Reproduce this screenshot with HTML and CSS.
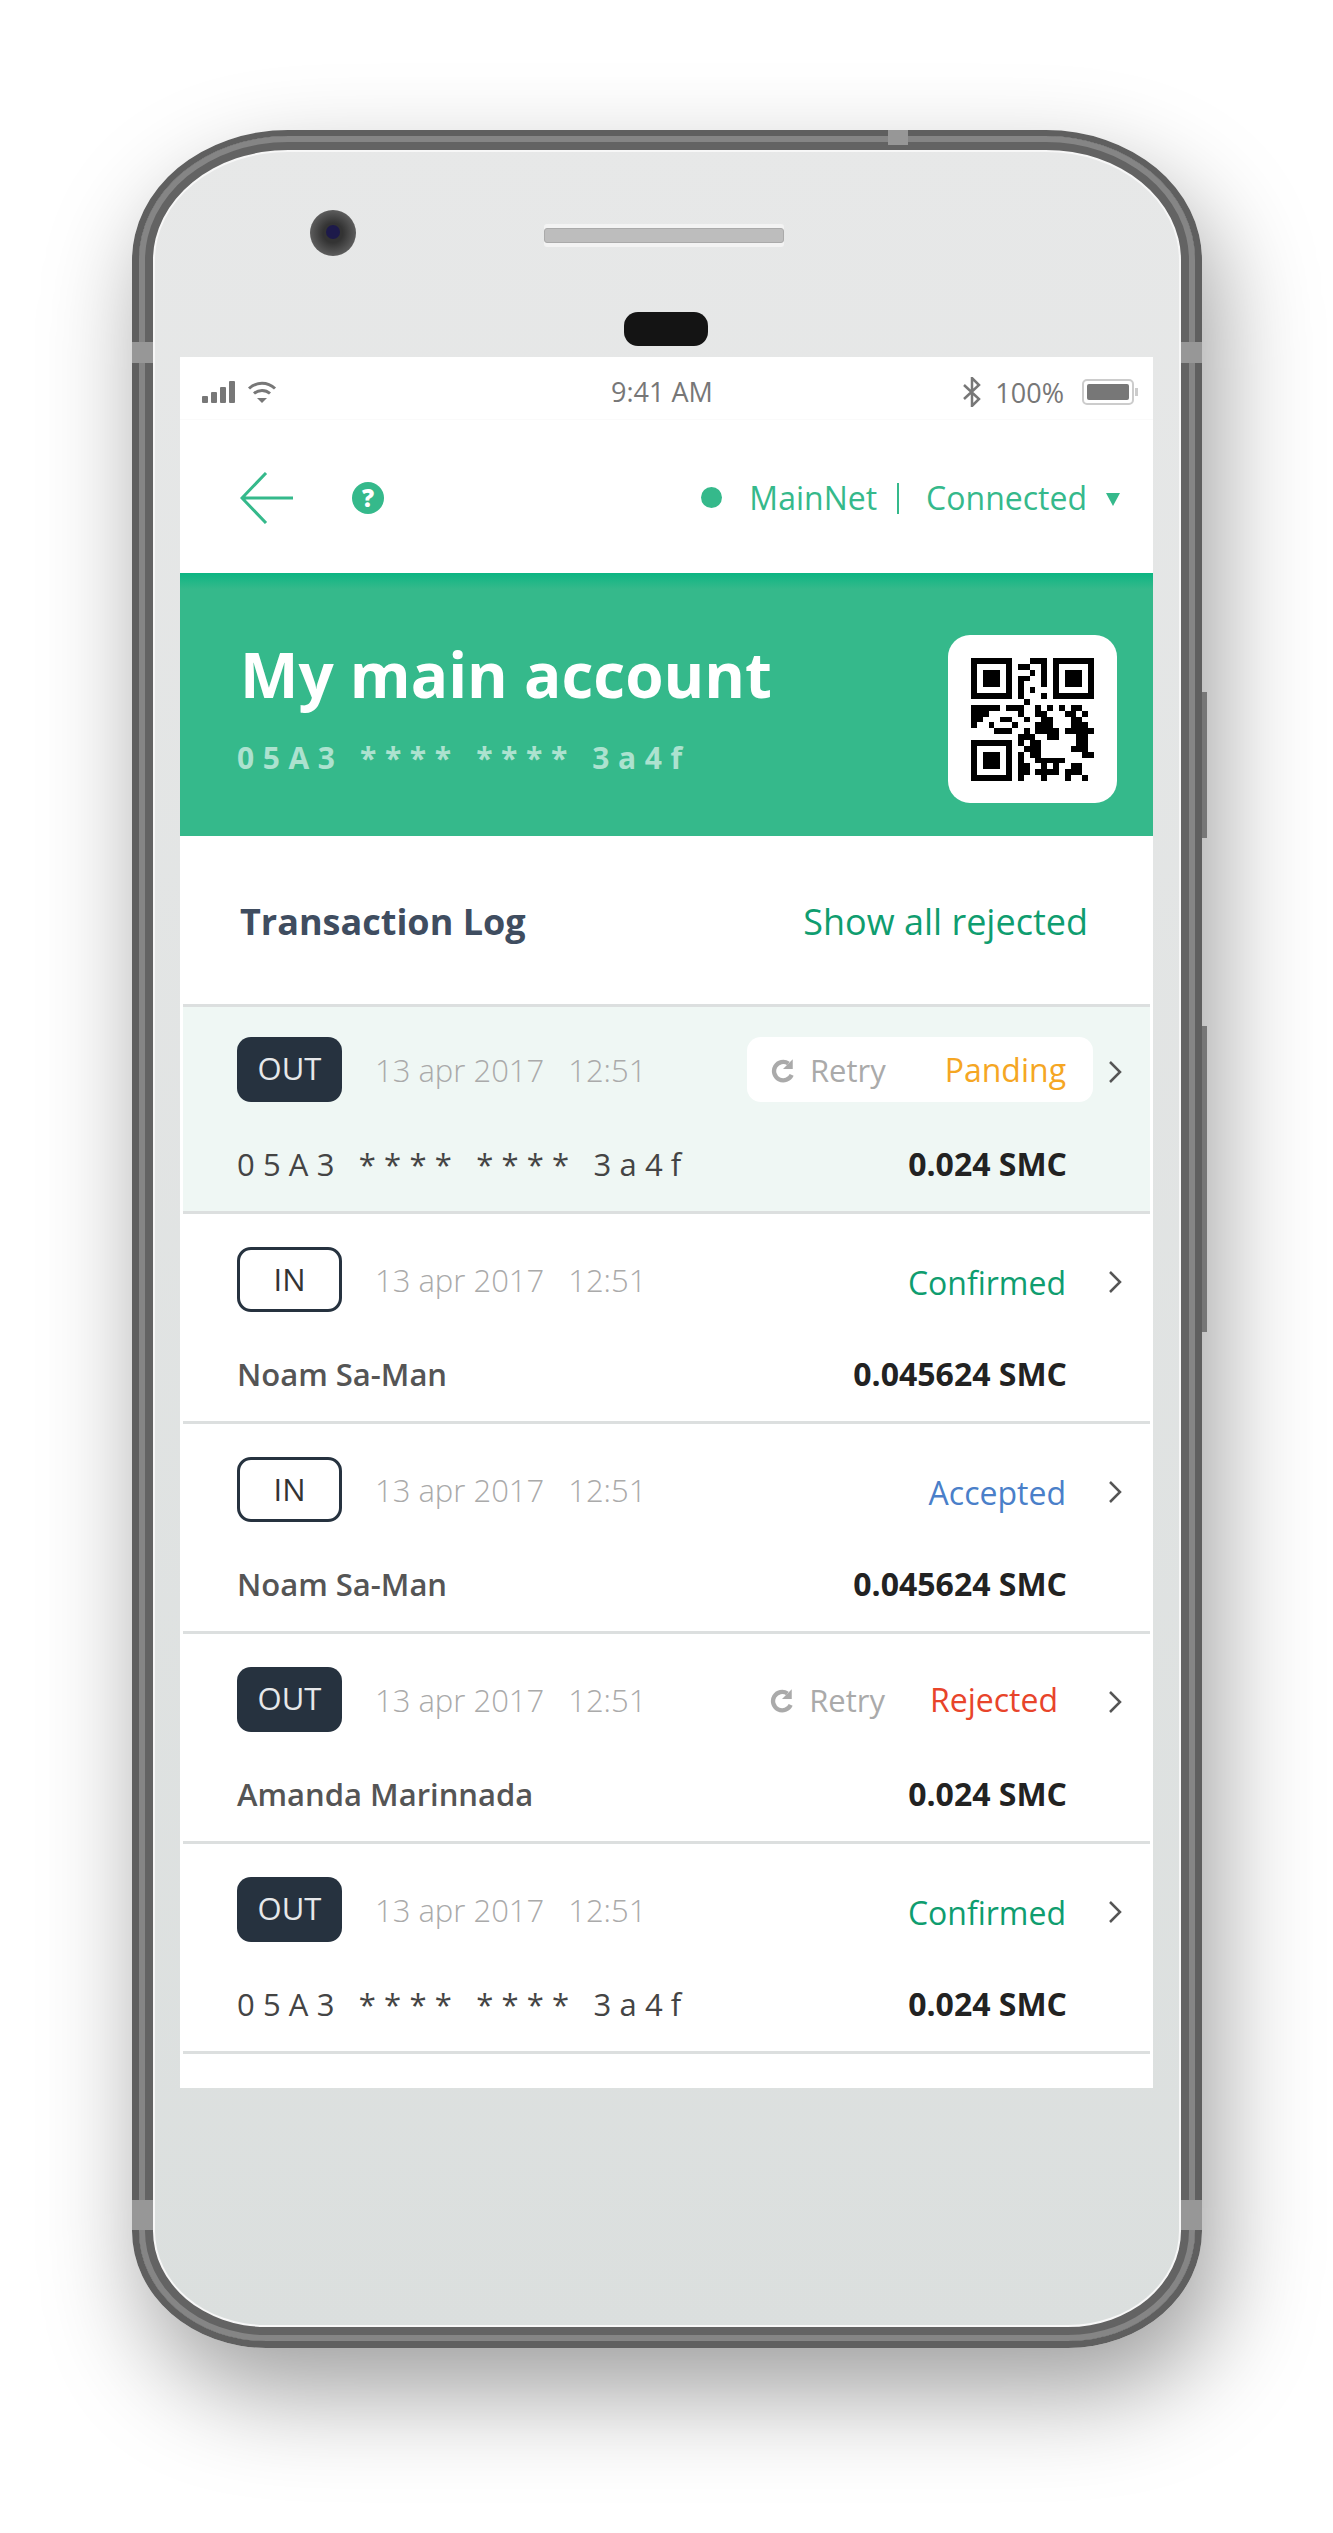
FILE: index.html
```html
<!doctype html>
<html lang="en">
  <head>
    <meta charset="UTF-8">
    <title>Transaction Log</title>
    <link rel="stylesheet" href="styles.css">
  </head>
  <body>
    <div class="phone">
      <span class="notch notch-top"></span>
      <span class="notch notch-left"></span>
      <span class="notch notch-right"></span>
      <span class="notch notch-left-low"></span>
      <span class="notch notch-right-low"></span>
      <span class="side-key key-upper"></span>
      <span class="side-key key-lower"></span>

      <div class="bezel-top">
        <div class="camera"><span></span></div>
        <div class="speaker"></div>
        <div class="sensor"></div>
      </div>

      <main class="screen">
        <div class="status-bar">
          <div class="status-left">
            <svg width="34" height="22" viewBox="0 0 34 22" fill="#777">
              <rect x="0" y="15" width="6" height="7" rx="1"/>
              <rect x="9" y="11" width="6" height="11" rx="1"/>
              <rect x="18" y="6" width="6" height="16" rx="1"/>
              <rect x="27" y="0" width="6" height="22" rx="1"/>
            </svg>
            <svg width="30" height="22" viewBox="0 0 30 22" fill="none" stroke="#777" stroke-width="3">
              <path d="M2 7.5C9.5 .5 20.5 .5 28 7.5"/>
              <path d="M7 12.5C11.500 8.500 18.500 8.500 23 12.500"/>
              <path d="M10 17h10l-5 5z" fill="#777" stroke="none"/>
            </svg>
          </div>
          <div class="status-time">9:41 AM</div>
          <div class="status-right">
            <svg width="20" height="30" viewBox="0 0 20 30" fill="none" stroke="#777" stroke-width="2.500">
              <path d="M2 8l15 14-7 7V1l7 7L2 22"/>
            </svg>
            <span>100%</span>
            <div class="battery"><span></span></div>
          </div>
        </div>

        <nav class="top-nav">
          <svg class="back" width="54" height="52" viewBox="0 0 54 52" fill="none" stroke="#35b98b" stroke-width="3">
            <path d="M26 1L2 26l24 25M2 26h51"/>
          </svg>
          <div class="help">?</div>
          <div class="network">
            <span class="net-dot"></span>
            <span>MainNet</span>
            <span class="net-sep"></span>
            <span>Connected</span>
            <span class="net-caret"></span>
          </div>
        </nav>

        <header class="hero">
          <div class="hero-text">
            <h1>My main account</h1>
            <p class="hero-addr">05A3 **** **** 3a4f</p>
          </div>
          <div class="qr">
            <svg width="123" height="123" viewBox="0 0 21 21" shape-rendering="crispEdges">
              <path fill="#000" fill-rule="evenodd" d="M0 0h7v7h-7zM1 1v5h5v-5zM2 2h3v3h-3zM14 0h7v7h-7zM15 1v5h5v-5zM16 2h3v3h-3zM0 14h7v7h-7zM1 15v5h5v-5zM2 16h3v3h-3z"/>
              <path fill="#000" d="M10 0h3v1h-3zM8 1h2v1h-2zM12 1h1v2h-1zM10 2h1v1h-1zM8 3h2v1h-2zM12 3h1v2h-1zM8 4h1v2h-1zM10 5h1v1h-1zM12 6h1v1h-1zM8 6h1v1h-1zM9 7h1v1h-1zM0 8h5v1h-5zM6 8h3v1h-3zM11 8h1v1h-1zM13 8h1v1h-1zM15 8h1v1h-1zM17 8h2v1h-2zM0 9h3v1h-3zM8 9h1v1h-1zM11 9h2v1h-2zM16 9h2v1h-2zM19 9h1v1h-1zM0 10h2v1h-2zM5 10h2v1h-2zM9 10h1v1h-1zM12 10h2v1h-2zM17 10h2v1h-2zM0 11h1v1h-1zM3 11h1v1h-1zM7 11h1v1h-1zM11 11h3v1h-3zM17 11h3v1h-3zM4 12h3v1h-3zM9 12h1v1h-1zM11 12h4v1h-4zM16 12h5v1h-5zM8 13h3v1h-3zM13 13h2v1h-2zM18 13h2v1h-2zM8 14h1v1h-1zM10 14h2v1h-2zM18 14h2v1h-2zM9 15h3v1h-3zM17 15h3v1h-3zM8 16h1v1h-1zM10 16h2v1h-2zM19 16h2v1h-2zM8 17h1v1h-1zM11 17h5v1h-5zM8 18h2v1h-2zM12 18h1v1h-1zM14 18h1v1h-1zM17 18h2v1h-2zM8 19h2v1h-2zM11 19h4v1h-4zM16 19h3v1h-3zM8 20h1v1h-1zM12 20h1v1h-1zM16 20h1v1h-1zM19 20h1v1h-1z"/>
            </svg>
          </div>
        </header>

        <div class="log-head">
          <h2>Transaction Log</h2>
          <a class="show-rejected" href="#">Show all rejected</a>
        </div>

        <section class="tx-list">
          <article class="tx tx-active">
            <div class="tx-top">
              <span class="badge badge-out">OUT</span>
              <span class="tx-date">13 apr 2017</span>
              <span class="tx-time">12:51</span>
              <div class="tx-state state-pill">
                <svg class="retry-icon" width="24" height="26" viewBox="0 0 22 24" fill="none" stroke="#aaa" stroke-width="4">
                  <path d="M19 16.500A8.500 8.500 0 1 1 16 6"/>
                  <path d="M20 2v9h-9z" fill="#aaa" stroke="none"/>
                </svg>
                <span class="retry">Retry</span>
                <span class="st-pending">Panding</span>
              </div>
              <svg class="chev" width="14" height="24" viewBox="0 0 14 24" fill="none" stroke="#555" stroke-width="2.500"><path d="M2 2l10 10L2 22"/></svg>
            </div>
            <div class="tx-bottom">
              <span class="tx-addr">05A3 **** **** 3a4f</span>
              <span class="tx-amount">0.024 SMC</span>
            </div>
          </article>

          <article class="tx">
            <div class="tx-top">
              <span class="badge badge-in">IN</span>
              <span class="tx-date">13 apr 2017</span>
              <span class="tx-time">12:51</span>
              <div class="tx-state">
                <span class="st-confirmed">Confirmed</span>
              </div>
              <svg class="chev" width="14" height="24" viewBox="0 0 14 24" fill="none" stroke="#555" stroke-width="2.500"><path d="M2 2l10 10L2 22"/></svg>
            </div>
            <div class="tx-bottom">
              <span class="tx-name">Noam Sa-Man</span>
              <span class="tx-amount">0.045624 SMC</span>
            </div>
          </article>

          <article class="tx">
            <div class="tx-top">
              <span class="badge badge-in">IN</span>
              <span class="tx-date">13 apr 2017</span>
              <span class="tx-time">12:51</span>
              <div class="tx-state">
                <span class="st-accepted">Accepted</span>
              </div>
              <svg class="chev" width="14" height="24" viewBox="0 0 14 24" fill="none" stroke="#555" stroke-width="2.500"><path d="M2 2l10 10L2 22"/></svg>
            </div>
            <div class="tx-bottom">
              <span class="tx-name">Noam Sa-Man</span>
              <span class="tx-amount">0.045624 SMC</span>
            </div>
          </article>

          <article class="tx">
            <div class="tx-top">
              <span class="badge badge-out">OUT</span>
              <span class="tx-date">13 apr 2017</span>
              <span class="tx-time">12:51</span>
              <div class="tx-state">
                <svg class="retry-icon" width="24" height="26" viewBox="0 0 22 24" fill="none" stroke="#aaa" stroke-width="4">
                  <path d="M19 16.500A8.500 8.500 0 1 1 16 6"/>
                  <path d="M20 2v9h-9z" fill="#aaa" stroke="none"/>
                </svg>
                <span class="retry">Retry</span>
                <span class="st-rejected">Rejected</span>
              </div>
              <svg class="chev" width="14" height="24" viewBox="0 0 14 24" fill="none" stroke="#555" stroke-width="2.500"><path d="M2 2l10 10L2 22"/></svg>
            </div>
            <div class="tx-bottom">
              <span class="tx-name">Amanda Marinnada</span>
              <span class="tx-amount">0.024 SMC</span>
            </div>
          </article>

          <article class="tx">
            <div class="tx-top">
              <span class="badge badge-out">OUT</span>
              <span class="tx-date">13 apr 2017</span>
              <span class="tx-time">12:51</span>
              <div class="tx-state">
                <span class="st-confirmed">Confirmed</span>
              </div>
              <svg class="chev" width="14" height="24" viewBox="0 0 14 24" fill="none" stroke="#555" stroke-width="2.500"><path d="M2 2l10 10L2 22"/></svg>
            </div>
            <div class="tx-bottom">
              <span class="tx-addr">05A3 **** **** 3a4f</span>
              <span class="tx-amount">0.024 SMC</span>
            </div>
          </article>
        </section>
      </main>
    </div>
  </body>
</html>
```

FILE: styles.css
```css
html, body {
  background-color: #fff;
  margin: 0;
  padding: 0
}
body {
  color: #222;
  font-family: "Open Sans", "Liberation Sans", sans-serif;
  height: 2533px;
  overflow: hidden;
  padding: 130px 0 0 132px;
  box-sizing: border-box
}
h1, h2, p {
  margin: 0
}

/* phone body */
.phone {
  background: linear-gradient(#e7e8e8, #dbdfde);
  border: 7px solid #5f5f5f;
  border-top-width: 6px;
  border-radius: 156px 156px 134px 134px / 130px 130px 117px 117px;
  box-shadow:
    inset 0 0 0 6px #858585,
    inset 0 0 0 14px #636363,
    inset 0 0 0 16px #f7f7f7,
    14px 44px 100px rgba(0, 0, 0, .38);
  box-sizing: border-box;
  height: 2218px;
  position: relative;
  width: 1070px
}
.notch {
  background-color: #979797;
  position: absolute
}
.notch-top {
  height: 15px;
  left: 749px;
  top: -6px;
  width: 20px
}
.notch-left, .notch-right, .notch-left-low, .notch-right-low {
  height: 21px;
  top: 206px;
  width: 21px
}
.notch-left, .notch-left-low {
  left: -7px
}
.notch-right, .notch-right-low {
  right: -7px
}
.notch-left-low, .notch-right-low {
  height: 30px;
  top: 2064px
}
.side-key {
  background-color: #777;
  position: absolute;
  right: -12px;
  width: 5px
}
.key-upper {
  height: 146px;
  top: 556px
}
.key-lower {
  height: 306px;
  top: 890px
}
.bezel-top {
  height: 221px;
  position: relative
}
.camera {
  background: radial-gradient(#333 30%, #5c5c5c 70%);
  border-radius: 50%;
  height: 46px;
  left: 171px;
  position: absolute;
  top: 74px;
  width: 46px
}
.camera span {
  background-color: #1d1a4a;
  border-radius: 50%;
  display: block;
  height: 14px;
  margin: 15px auto;
  width: 14px
}
.speaker {
  background-color: #bdbdbd;
  border: 1px solid #aaa;
  border-radius: 3px;
  box-shadow: 0 -4px 0 #f3f3f3, 0 4px 0 #f3f3f3;
  box-sizing: border-box;
  height: 15px;
  left: 405px;
  position: absolute;
  top: 92px;
  width: 240px
}
.sensor {
  background-color: #141414;
  border-radius: 14px;
  height: 34px;
  left: 485px;
  position: absolute;
  top: 176px;
  width: 84px
}

/* screen */
.screen {
  background-color: #fff;
  height: 1731px;
  margin-left: 41px;
  width: 973px
}
.status-bar {
  align-items: center;
  border-bottom: 1px solid #fafafa;
  box-sizing: border-box;
  color: #777;
  display: flex;
  font-size: 27px;
  height: 63px;
  justify-content: space-between;
  padding: 8px 19px 0 22px;
  position: relative
}
.status-left {
  align-items: center;
  display: flex;
  gap: 11px
}
.status-time {
  left: 431px;
  position: absolute;
  top: 16px
}
.status-right {
  align-items: center;
  display: flex;
  gap: 13px
}
.battery {
  border: 2px solid #ccc;
  border-radius: 5px;
  box-sizing: border-box;
  height: 26px;
  margin-left: 5px;
  padding: 3px;
  position: relative;
  width: 52px
}
.battery::after {
  background-color: #ccc;
  content: "";
  height: 8px;
  position: absolute;
  right: -6px;
  top: 7px;
  width: 3px
}
.battery span {
  background-color: #777;
  border-radius: 2px;
  display: block;
  height: 100%
}

.top-nav {
  align-items: center;
  box-sizing: border-box;
  color: #35b98b;
  display: flex;
  font-size: 32px;
  height: 153px;
  padding: 2px 33px 0 60px
}
.help {
  background-color: #35b98b;
  border-radius: 50%;
  color: #fff;
  font-size: 24px;
  font-weight: 800;
  height: 32px;
  line-height: 32px;
  margin-left: 58px;
  text-align: center;
  width: 32px
}
.network {
  align-items: center;
  display: flex;
  margin-left: auto
}
.net-dot {
  background-color: #35b98b;
  border-radius: 50%;
  height: 21px;
  margin-right: 27px;
  width: 21px
}
.net-sep {
  background-color: #35b98b;
  height: 31px;
  margin: 2px 27px 0 20px;
  width: 2px
}
.net-caret {
  border-left: 7px solid transparent;
  border-right: 7px solid transparent;
  border-top: 13px solid #35b98b;
  margin: 3px 0 0 19px
}

.hero {
  align-items: flex-start;
  background: linear-gradient(#0cb582, #35b98b 16px);
  box-sizing: border-box;
  display: flex;
  height: 263px;
  justify-content: space-between;
  padding: 0 36px 0 60px
}
.hero-text {
  padding-top: 59px
}
.hero h1 {
  color: #fff;
  font-size: 62px;
  font-weight: 700;
  line-height: 84px
}
.hero-addr {
  color: rgba(255, 255, 255, .6);
  font-size: 30px;
  font-weight: 700;
  letter-spacing: 8.600px;
  line-height: 40px;
  margin: 22px 0 0 -3px;
  white-space: pre
}
.qr {
  align-items: center;
  background-color: #fff;
  border-radius: 22px;
  display: flex;
  height: 168px;
  justify-content: center;
  margin-top: 62px;
  width: 169px
}

.log-head {
  align-items: center;
  display: flex;
  height: 168px;
  justify-content: space-between;
  padding: 2px 65px 0 60px;
  box-sizing: border-box
}
.log-head h2 {
  color: #3f4d60;
  font-size: 36px;
  font-weight: 700
}
.show-rejected {
  color: #0f9d6f;
  font-size: 36px;
  text-decoration: none
}

/* transaction rows */
.tx-list {
  border-top: 3px solid #dcdfdf;
  margin: 0 3px
}
.tx {
  border-bottom: 3px solid #dcdfdf;
  box-sizing: border-box;
  height: 210px;
  padding: 33px 0 0 54px
}
.tx-active {
  background-color: #eff7f4;
  height: 207px;
  padding-top: 30px
}
.tx-top {
  align-items: center;
  display: flex;
  height: 65px
}
.badge {
  border-radius: 14px;
  box-sizing: border-box;
  font-size: 31px;
  height: 65px;
  line-height: 63px;
  text-align: center;
  width: 105px
}
.badge-out {
  background-color: #26323f;
  color: #e6e8ea
}
.badge-in {
  background-color: #fff;
  border: 3px solid #26323f;
  color: #333;
  line-height: 59px
}
.tx-date, .tx-time {
  color: #aaa;
  font-size: 31px;
  font-weight: 300
}
.tx-date {
  margin-left: 33px
}
.tx-time {
  margin-left: 24px
}
.tx-state {
  align-items: center;
  border-radius: 14px;
  display: flex;
  font-size: 32px;
  height: 65px;
  margin-left: auto;
  padding: 0 27px
}
.state-pill {
  background-color: #fff;
  padding-left: 24px
}
.retry-icon {
  margin-right: 15px
}
.retry {
  color: #aaa;
  font-size: 31px
}
.st-pending {
  color: #f5a623;
  margin-left: 59px
}
.st-confirmed {
  color: #0f9d6f;
  margin-top: 5px
}
.st-accepted {
  color: #4a7fc9;
  margin-top: 5px
}
.st-rejected {
  color: #e8442a;
  margin: 0 8px 0 45px
}
.chev {
  flex-shrink: 0;
  margin: 5px 28px 0 15px
}
.tx-bottom {
  align-items: center;
  display: flex;
  justify-content: space-between;
  margin-top: 40px;
  padding-right: 83px
}
.tx-addr {
  color: #444;
  font-size: 31px;
  letter-spacing: 8.200px
}
.tx-name {
  color: #555;
  font-size: 31px;
  font-weight: 600
}
.tx-amount {
  color: #222;
  font-size: 32px;
  font-weight: 700
}
```
